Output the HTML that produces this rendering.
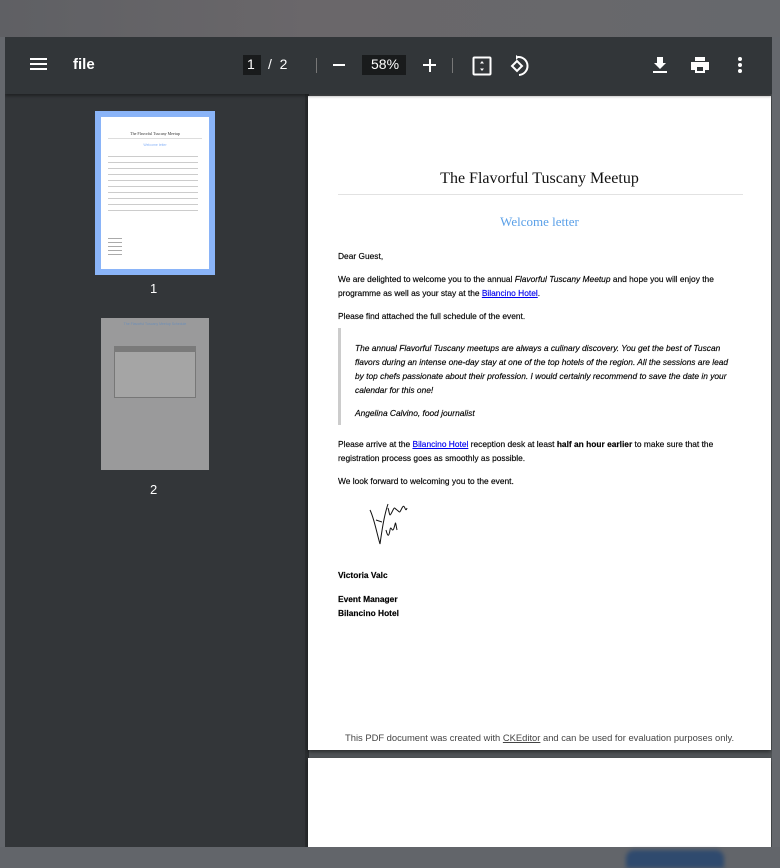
<!DOCTYPE html>
<html><head><meta charset="utf-8"><style>
*{margin:0;padding:0;box-sizing:border-box}
body{width:780px;height:868px;overflow:hidden;background:#65686d;font-family:"Liberation Sans",sans-serif;position:relative}
.abs{position:absolute}
#viewer{left:5px;top:37px;width:767px;height:810px;background:#333639;overflow:hidden}
#tb{left:0;top:0;width:767px;height:57px;background:#323639;box-shadow:0 2px 3px rgba(0,0,0,.4);z-index:2}
.w{color:#fff}
#side{left:0;top:57px;width:300px;height:753px;background:#333639}
#main{left:300px;top:57px;width:467px;height:753px;background:#525659}
.pg{background:#fff;box-shadow:0 2px 4px rgba(0,0,0,.5)}
.t{position:absolute;font-size:8.4px;color:#000;white-space:nowrap;font-family:"Liberation Sans",sans-serif;-webkit-text-stroke:0.15px #000}
.i{font-style:italic}
a{color:#00e;text-decoration:underline;-webkit-text-stroke:0.15px #00e}
</style></head><body>
<div class="abs" style="left:0;top:0;width:780px;height:37px;background:linear-gradient(90deg,#5f6064,#6a676a 40%,#66686c)"></div>
<div id="viewer" class="abs">
 <div id="tb" class="abs">
  <div class="abs" style="left:25px;top:21px;width:17px;height:2px;background:#fff;box-shadow:0 5px 0 #fff,0 10px 0 #fff"></div>
  <div class="abs w" style="left:68px;top:19px;font-size:15px;font-weight:bold">file</div>
  <div class="abs" style="left:238px;top:18px;width:18px;height:20px;background:#191b1c"></div>
  <div class="abs w" style="left:242px;top:19px;font-size:14px">1</div>
  <div class="abs w" style="left:263px;top:19px;font-size:14px">/&nbsp;&nbsp;2</div>
  <div class="abs" style="left:311px;top:21px;width:1px;height:15px;background:#777"></div>
  <div class="abs" style="left:328px;top:27px;width:12px;height:2px;background:#fff"></div>
  <div class="abs" style="left:357px;top:18px;width:44px;height:20px;background:#191b1c"></div>
  <div class="abs w" style="left:366px;top:19px;font-size:14px">58%</div>
  <div class="abs" style="left:418px;top:27px;width:13px;height:2px;background:#fff"></div>
  <div class="abs" style="left:423.5px;top:21.5px;width:2px;height:13px;background:#fff"></div>
  <div class="abs" style="left:447px;top:21px;width:1px;height:15px;background:#777"></div>
  <svg class="abs" style="left:467px;top:19px" width="20" height="20" viewBox="0 0 20 20"><rect x="1.5" y="1.5" width="17" height="17" fill="none" stroke="#fff" stroke-width="2" rx="1"/><path d="M10 5l-2 2.5h4zM10 15l-2-2.5h4z" fill="#fff"/></svg>
  <svg class="abs" style="left:502px;top:18px" width="22" height="22" viewBox="0 0 22 22"><path d="M10 6l-5 5 5 5 5-5z" fill="none" stroke="#fff" stroke-width="2"/><path d="M11 2a9 9 0 0 1 1 18" fill="none" stroke="#fff" stroke-width="2"/><path d="M9 0l3 2-3 3z" fill="#fff"/></svg>
  <svg class="abs" style="left:645px;top:18px" width="20" height="20" viewBox="0 0 20 20"><path d="M7 2h6v6h3l-6 6-6-6h3z M3 16h14v2H3z" fill="#fff"/></svg>
  <svg class="abs" style="left:684px;top:18px" width="22" height="20" viewBox="0 0 22 20"><path d="M6 2h10v4H6z M2 7h18v8h-4v3H6v-3H2z" fill="#fff"/><rect x="8" y="12" width="6" height="4" fill="#323639"/></svg>
  <div class="abs" style="left:733px;top:20px;width:4px;height:4px;border-radius:2px;background:#fff;box-shadow:0 6px 0 #fff,0 12px 0 #fff"></div>
 </div>
 <div id="side" class="abs">
  <div class="abs" style="left:90px;top:17px;width:120px;height:164px;background:#8ab4f8"></div>
  <div class="abs" style="left:96px;top:23px;width:108px;height:152px;background:#fff">
   <div class="abs" style="left:0;width:108px;top:14px;text-align:center;font-family:'Liberation Serif',serif;font-size:4px;color:#333">The Flavorful Tuscany Meetup</div>
   <div class="abs" style="left:7px;top:21px;width:94px;height:1px;background:#ddd"></div>
   <div class="abs" style="left:0;width:108px;top:26px;text-align:center;font-size:3.5px;color:#8ab4f8">Welcome letter</div>
   <div class="abs" style="left:7px;top:36px;width:90px;height:60px;background:repeating-linear-gradient(#fff 0 3px,#ccc 3px 4px,#fff 4px 6px)"></div>
   <div class="abs" style="left:7px;top:118px;width:14px;height:20px;background:repeating-linear-gradient(#fff 0 3px,#aaa 3px 4px)"></div>
  </div>
  <div class="abs w" style="left:145px;top:187px;font-size:13px">1</div>
  <div class="abs" style="left:96px;top:224px;width:108px;height:152px;background:#9a9a9b">
   <div class="abs" style="left:0;width:108px;top:4px;text-align:center;font-size:3.5px;color:#6d8fb8">The Flavorful Tuscany Meetup Schedule</div>
   <div class="abs" style="left:13px;top:28px;width:82px;height:52px;border:1px solid #777;background:#a5a5a5"></div>
   <div class="abs" style="left:13px;top:28px;width:82px;height:6px;background:#7a7a7a"></div>
  </div>
  <div class="abs w" style="left:145px;top:388px;font-size:13px">2</div>
 </div>
 <div id="main" class="abs">
  <div class="abs" style="left:0;top:0;width:4px;height:753px;background:#2b2e30"></div>
  <div class="abs pg" style="left:3px;top:2px;width:463px;height:654px">
   <div class="abs" style="left:0;width:463px;top:74px;text-align:center;font-family:'Liberation Serif',serif;font-size:16px;color:#111">The Flavorful Tuscany Meetup</div>
   <div class="abs" style="left:30px;top:98px;width:405px;height:1px;background:#e2e2e2"></div>
   <div class="abs" style="left:0;width:463px;top:118px;text-align:center;font-family:'Liberation Serif',serif;font-size:13px;color:#5aa0e8">Welcome letter</div>
   <div class="t" style="left:30px;top:155px">Dear Guest,</div>
   <div class="t" style="left:30px;top:178px">We are delighted to welcome you to the annual <span class="i">Flavorful Tuscany Meetup</span> and hope you will enjoy the</div>
   <div class="t" style="left:30px;top:192px">programme as well as your stay at the <a>Bilancino Hotel</a>.</div>
   <div class="t" style="left:30px;top:215px">Please find attached the full schedule of the event.</div>
   <div class="abs" style="left:30px;top:232px;width:3px;height:97px;background:#ccc"></div>
   <div class="t i" style="left:47px;top:247px">The annual Flavorful Tuscany meetups are always a culinary discovery. You get the best of Tuscan</div>
   <div class="t i" style="left:47px;top:261px">flavors during an intense one-day stay at one of the top hotels of the region. All the sessions are lead</div>
   <div class="t i" style="left:47px;top:275px">by top chefs passionate about their profession. I would certainly recommend to save the date in your</div>
   <div class="t i" style="left:47px;top:289px">calendar for this one!</div>
   <div class="t i" style="left:47px;top:312px">Angelina Calvino, food journalist</div>
   <div class="t" style="left:30px;top:343px">Please arrive at the <a>Bilancino Hotel</a> reception desk at least <b>half an hour earlier</b> to make sure that the</div>
   <div class="t" style="left:30px;top:357px">registration process goes as smoothly as possible.</div>
   <div class="t" style="left:30px;top:380px">We look forward to welcoming you to the event.</div>
   <svg class="abs" style="left:60px;top:404px" width="45" height="50" viewBox="0 0 45 50"><path d="M2 10c4 8 6 20 10 34M12 44c2-14 4-28 8-40M8 20l6 2M20 8c2 6 1 10 4 4s2-4 5-2 2 4 5-2 3 6 5 0M18 30c2 8 3 6 4 0s2 4 4-2 1-8 3 2" fill="none" stroke="#111" stroke-width="1"/></svg>
   <div class="t" style="left:30px;top:474px;font-weight:bold">Victoria Valc</div>
   <div class="t" style="left:30px;top:498px;font-weight:bold">Event Manager</div>
   <div class="t" style="left:30px;top:512px;font-weight:bold">Bilancino Hotel</div>
   <div class="t" style="left:37px;top:636px;font-size:9.4px;color:#444;-webkit-text-stroke:0">This PDF document was created with <span style="text-decoration:underline">CKEditor</span> and can be used for evaluation purposes only.</div>
  </div>
  <div class="abs pg" style="left:3px;top:664px;width:463px;height:100px"></div>
 </div>
</div>
<div class="abs" style="left:0;top:847px;width:780px;height:21px;background:#62656a"></div>
<div class="abs" style="left:626px;top:850px;width:98px;height:18px;background:#2f4a6e;border-radius:8px 8px 0 0;filter:blur(2px)"></div>
</body></html>
